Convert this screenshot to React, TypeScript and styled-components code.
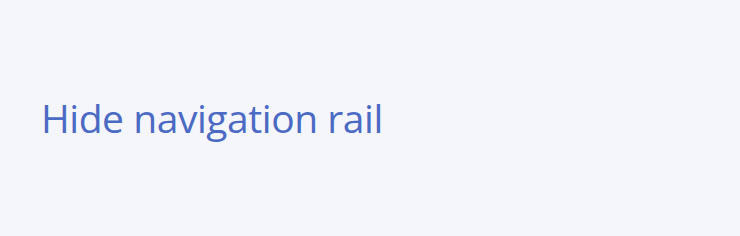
import React from 'react';
import styled, {createGlobalStyle} from 'styled-components';

const GlobalStyle = createGlobalStyle`
  html, body {
    margin: 0;
    padding: 0;
    background: #f5f6fb;
  }
`;

const Panel = styled.div`
  height: 236px;
  box-sizing: border-box;
  display: flex;
  align-items: center;
  padding: 0 0 2px 41px;
  background: #f5f6fb;
`;

const LinkButton = styled.button`
  border: none;
  background: none;
  padding: 0;
  cursor: pointer;
  font-family: "Open Sans", "Noto Sans", sans-serif;
  font-size: 39px;
  font-weight: 400;
  letter-spacing: -0.45px;
  color: #4b6ac3;
`;

const App = () => {
    return (
        <>
            <GlobalStyle />
            <Panel>
                <LinkButton>Hide navigation rail</LinkButton>
            </Panel>
        </>
    );
};

export default App;
